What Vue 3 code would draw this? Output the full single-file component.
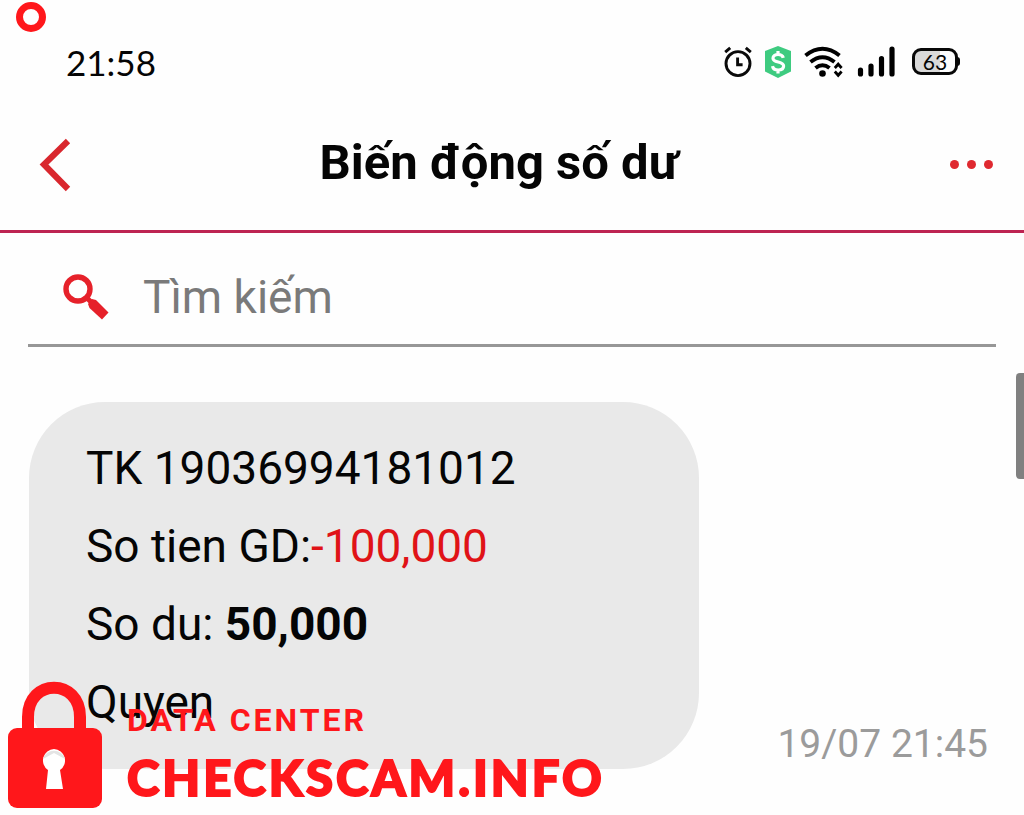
<script setup>
import { ref } from 'vue';

const keyword = ref('');

const status = {
  time: '21:58',
  battery: 63
};

const messages = [
  {
    id: 1,
    account: '19036994181012',
    amount: '-100,000',
    balance: '50,000',
    note: 'Quyen',
    time: '19/07 21:45'
  }
];
</script>

<template>
  <div class="screen">
    <div class="status-bar">
      <span class="clock">{{ status.time }}</span>
      <div class="status-icons">
        <svg class="alarm" viewBox="0 0 28 32" aria-hidden="true">
          <g fill="none" stroke="#0a0a0a" stroke-width="2.9">
            <circle cx="14" cy="17.6" r="12" />
            <path d="M13.600 11.500v7.200h5M1.200 6.200l5-4.400M26.800 6.200l-5-4.400" />
          </g>
        </svg>
        <svg class="shield" viewBox="0 0 26 32" aria-hidden="true">
          <path d="M13 0l13 5v20.500L13 32 0 25.500V5z" fill="#3ecb80" />
          <path d="M18.300 11.800c-.5-2-2.400-3.300-5.200-3.300-3.100 0-5.100 1.400-5.100 3.700 0 5.200 10.600 2.500 10.600 7.900 0 2.400-2.200 3.900-5.400 3.900-3.100 0-5.200-1.400-5.700-3.900M13 5v4M13 23.500v4" fill="none" stroke="#fff" stroke-width="3.200" />
        </svg>
        <svg class="wifi" viewBox="0 0 40 32" aria-hidden="true">
          <g fill="none" stroke="#000" stroke-width="4">
            <path d="M1.500 9.500Q18.500-4 35.500 9.500" />
            <path d="M6.500 16Q18.500 6.500 30.500 16" />
            <path d="M11.500 22Q18.500 16.500 25.500 22" />
          </g>
          <circle cx="18.500" cy="27.500" r="3.300" />
          <path d="M30.800 22l3.400-3.800 3.400 3.800M30.800 25.500l3.400 3.800 3.400-3.800" fill="none" stroke="#000" stroke-width="2.800" />
        </svg>
        <svg class="signal" viewBox="0 0 38 32" aria-hidden="true">
          <path d="M3.500 24v4M14 20v8M24.500 12.500V28M35 3v25" stroke="#000" stroke-width="5.200" stroke-linecap="round" />
        </svg>
        <span class="battery">{{ status.battery }}</span>
      </div>
    </div>

    <header class="header">
      <button class="back" type="button" aria-label="Quay lại">
        <svg viewBox="0 0 32 54" aria-hidden="true">
          <path d="M29 3L5 26.500 29 51" fill="none" stroke="#d9272e" stroke-width="6.200" />
        </svg>
      </button>
      <h1>Biến động số dư</h1>
      <button class="more" type="button" aria-label="Thêm">
        <i /><i /><i />
      </button>
    </header>

    <label class="search">
      <svg viewBox="0 0 46 46" aria-hidden="true">
        <circle cx="15" cy="15" r="12" fill="none" stroke="#e6212a" stroke-width="5.400" />
        <path d="M22.500 22.500l6 6" stroke="#e6212a" stroke-width="5" />
        <path d="M25 30l4-5 4 1L45.500 38.500 39 45.500 26.500 34z" fill="#e6212a" />
      </svg>
      <input v-model="keyword" type="text" placeholder="Tìm kiếm" aria-label="Tìm kiếm" />
    </label>

    <main class="messages">
      <article v-for="item in messages" :key="item.id" class="message">
        <div class="bubble">
          <p>TK {{ item.account }}</p>
          <p>So tien GD:<span class="amount">{{ item.amount }}</span></p>
          <p>So du: <strong>{{ item.balance }}</strong></p>
          <p>{{ item.note }}</p>
        </div>
        <time>{{ item.time }}</time>
      </article>
    </main>

    <div class="scroll-thumb" />
    <div class="ring" />

    <div class="watermark">
      <svg viewBox="0 0 96 128" aria-hidden="true">
        <path d="M21 50V36C21-3 73-3 73 36v14" fill="none" stroke="#ff171b" stroke-width="12" />
        <rect x="1" y="47" width="94" height="80" rx="9" fill="#ff171b" />
        <path d="M47 68a11.500 11.500 0 0 0-6 21l-2 19h17l-3-19a11.500 11.500 0 0 0-6-21z" fill="#fff" />
        <path d="M36 78l11-6 11 6a11.500 11.500 0 0 0-22 0z" fill="#e4e4e4" />
      </svg>
      <div class="watermark-text">
        <span class="watermark-label">DATA CENTER</span>
        <span class="watermark-name">CHECKSCAM.INFO</span>
      </div>
    </div>
  </div>
</template>

<style>
body {
  margin: 0;
  background: #fefefe;
}
</style>

<style scoped>
.screen {
  position: relative;
  min-height: 100vh;
  overflow: hidden;
  box-sizing: border-box;
  background: #fefefe;
  color: #050505;
  font-family: Roboto, "Liberation Sans", sans-serif;
}

.status-bar {
  display: flex;
  align-items: center;
  justify-content: space-between;
  height: 103px;
  padding: 20px 66px 0;
  box-sizing: border-box;
}

.clock {
  font-family: Lato, sans-serif;
  font-size: 35px;
  line-height: 40px;
}

.status-icons {
  display: flex;
  align-items: center;
  gap: 13px;
}

.status-icons svg {
  height: 32px;
}

.alarm {
  width: 28px;
}

.shield {
  width: 26px;
}

.wifi {
  width: 40px;
}

.signal {
  width: 38px;
}

.battery {
  position: relative;
  width: 46px;
  height: 27px;
  margin-left: 4px;
  box-sizing: border-box;
  border: 3px solid #080808;
  border-radius: 9px;
  background: linear-gradient(to right, #d9d9d9 63%, #fefefe 63%);
  font-family: Lato, sans-serif;
  font-size: 21px;
  line-height: 21px;
  text-align: center;
}

.battery::after {
  content: '';
  position: absolute;
  top: 6px;
  right: -5px;
  width: 3px;
  height: 9px;
  border-radius: 0 3px 3px 0;
  background: #080808;
}

.header {
  display: flex;
  align-items: center;
  height: 130px;
  padding: 0 31px 4px 39px;
  box-sizing: border-box;
  border-bottom: 3px solid #bd2452;
}

.header button {
  border: none;
  padding: 0;
  background: none;
}

.back {
  width: 32px;
  height: 54px;
}

.back svg {
  display: block;
  width: 32px;
  height: 54px;
}

h1 {
  flex: 1;
  margin: 0;
  padding-bottom: 4px;
  font-size: 49px;
  line-height: 60px;
  font-weight: 700;
  text-align: center;
}

.more {
  display: flex;
  align-items: center;
  justify-content: flex-end;
  gap: 8px;
  width: 66px;
  height: 54px;
}

.more i {
  width: 9px;
  height: 9px;
  border-radius: 50%;
  background: #df2930;
}

.search {
  display: flex;
  align-items: center;
  gap: 34px;
  height: 114px;
  margin: 0 28px;
  padding: 16px 35px 0;
  box-sizing: border-box;
  border-bottom: 3px solid #979797;
}

.search svg {
  flex: none;
  width: 46px;
  height: 46px;
}

.search input {
  flex: 1;
  min-width: 0;
  padding: 0;
  border: none;
  outline: none;
  background: none;
  color: #050505;
  font-family: inherit;
  font-size: 46px;
  line-height: 60px;
}

.search input::placeholder {
  color: #7a7a7a;
  opacity: 1;
}

.messages {
  padding: 55px 36px 45px 29px;
}

.message {
  display: flex;
  align-items: flex-end;
  gap: 78px;
}

.bubble {
  flex: 1;
  padding: 27px 57px 28px;
  border-radius: 76px;
  background: #e9e9e9;
}

.bubble p {
  margin: 0;
  font-size: 46px;
  line-height: 78px;
}

.amount {
  color: #e01317;
}

.message time {
  color: #9b9b9b;
  font-size: 39px;
  line-height: 50px;
}

.scroll-thumb {
  position: absolute;
  top: 373px;
  right: 0;
  width: 8px;
  height: 106px;
  border-radius: 4px 0 0 4px;
  background: #808080;
}

.ring {
  position: absolute;
  top: 2px;
  left: 16px;
  width: 30px;
  height: 30px;
  box-sizing: border-box;
  border: 7px solid #ff171b;
  border-radius: 50%;
}

.watermark {
  position: absolute;
  left: 7px;
  bottom: 6px;
  display: flex;
  align-items: flex-end;
  gap: 24px;
  color: #ff171b;
}

.watermark svg {
  width: 96px;
  height: 128px;
}

.watermark-text {
  display: flex;
  flex-direction: column;
}

.watermark-label {
  font-size: 32px;
  line-height: 50px;
  font-weight: 700;
  letter-spacing: 3px;
}

.watermark-name {
  font-family: Lato, sans-serif;
  font-size: 49px;
  line-height: 64px;
  font-weight: 900;
  letter-spacing: 3px;
  -webkit-text-stroke: 2px #ff171b;
}
</style>
